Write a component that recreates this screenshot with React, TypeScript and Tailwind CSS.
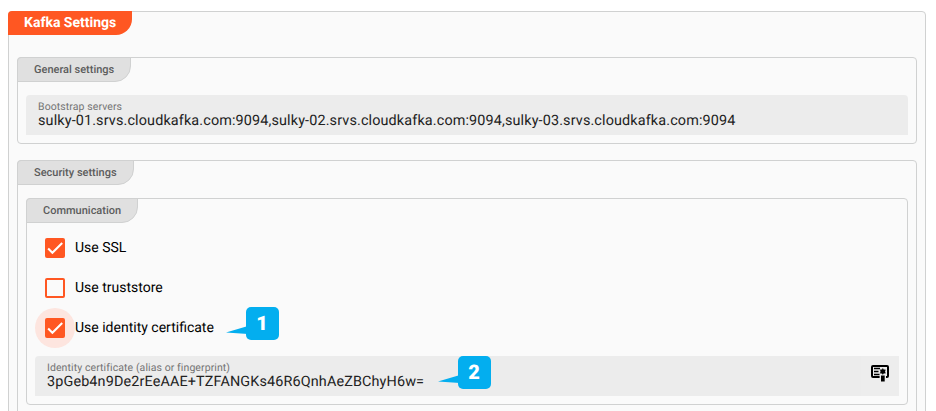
import type { ReactNode } from "react";

function Panel({ title, className, children }: { title: string; className: string; children: ReactNode }) {
  return (
    <section className={`rounded-[4px] border border-[#d0d1d1] ${className}`}>
      <h2 className="-mt-px -ml-px flex h-[25px] w-fit items-center rounded-tl-[4px] rounded-br-[16px] border border-[#d0d1d1] bg-[#e0e0e0] px-4 pt-px text-[11px] font-medium text-[#5c5c5c]">
        {title}
      </h2>
      {children}
    </section>
  );
}

function Field({ label, value, children }: { label: string; value: string; children?: ReactNode }) {
  return (
    <div className="flex h-10 rounded-t-[4px] bg-[#ececec]">
      <div className="flex min-w-0 flex-1 flex-col pl-3 pt-[5px]">
        <span className="h-[12px] text-[10.5px] leading-[13px] tracking-[0.09px] text-[#737373]">{label}</span>
        <span className="text-[14.4px] leading-[17px] tracking-[0.135px] text-[#222]">{value}</span>
      </div>
      {children}
    </div>
  );
}

function Check({ label, checked, focused }: { label: string; checked?: boolean; focused?: boolean }) {
  return (
    <div className="flex h-10 items-center">
      <span className={`flex size-10 shrink-0 items-center justify-center rounded-full ${focused ? "bg-[#fde5df]" : ""}`}>
        <span className={`flex size-5 items-center justify-center rounded-[2px] border-2 border-[#ff5722] ${checked ? "bg-[#ff5722]" : ""}`}>
          {checked && (
            <svg viewBox="0 0 24 24" className="size-4 shrink-0" fill="none" stroke="white" strokeWidth="3.12">
              <path d="M1.73 12.91 8.1 19.28 22.79 4.59" />
            </svg>
          )}
        </span>
      </span>
      <span className="text-[14px] leading-5 text-black">{label}</span>
    </div>
  );
}

function Callout({ n, className }: { n: number; className: string }) {
  return (
    <div className={`absolute flex h-[33px] w-[53px] justify-end ${className}`}>
      <svg className="absolute inset-0" width="53" height="33" viewBox="0 0 53 33">
        <path d="M0 25.5 22 19V27Z" fill="#03aeef" />
      </svg>
      <span className="relative flex h-[33px] w-[33px] items-center justify-center rounded-[5px] bg-[#03aeef] pr-px pb-0.5 text-[20px] font-black leading-none text-white">
        {n}
      </span>
    </div>
  );
}

export default function App() {
  return (
    <main className="relative h-[411px] w-[936px] overflow-hidden bg-white pl-2 pt-[11px] font-['Roboto',sans-serif] [text-rendering:geometricPrecision]">
      <section className="h-[440px] w-[918px] rounded-[4px] border border-[#d0d1d1] bg-[#fafafa]">
        <h1 className="-ml-px -mt-px flex h-6 w-[124px] items-center rounded-tl-[4px] rounded-br-[16px] bg-[#ff5722] pl-4 text-[14px] font-bold text-white">
          Kafka Settings
        </h1>
        <div className="flex flex-col gap-4 px-2 pt-[22px]">
          <Panel title="General settings" className="h-[87px]">
            <div className="px-2 pt-[13px]">
              <Field label="Bootstrap servers" value="sulky-01.srvs.cloudkafka.com:9094,sulky-02.srvs.cloudkafka.com:9094,sulky-03.srvs.cloudkafka.com:9094" />
            </div>
          </Panel>
          <Panel title="Security settings" className="h-[300px]">
            <div className="px-2 pt-[13px]">
              <Panel title="Communication" className="h-[207px]">
                <div className="px-2 pt-[5px]">
                  <Check label="Use SSL" checked />
                  <Check label="Use truststore" />
                  <Check label="Use identity certificate" checked focused />
                </div>
                <div className="px-2 pt-2">
                  <Field label="Identity certificate (alias or fingerprint)" value="3pGeb4n9De2rEeAAE+TZFANGKs46R6QnhAeZBChyH6w=">
                    <div className="flex w-[38px] items-center justify-center bg-[#ededed] pb-[6px]">
                      <svg width="20" height="18" viewBox="0 0 20 18" fill="none" stroke="black">
                        <path d="M9.6 13H3Q2 13 2 12V3Q2 2 3 2H17Q18 2 18 3V12Q18 13 17 13H16" strokeWidth="2" />
                        <path d="M4 4.6H10M4 7.5H8.5M4 10.4H9.5" strokeWidth="1.5" />
                        <path d="M12.8 4.4 13.7 5.8 15.4 5.8 14.9 7.5 15.4 9.2 13.8 9.2 12.8 10.4 11.8 9.2 10.2 9.2 10.7 7.5 10.2 5.8 11.9 5.8Z" fill="black" stroke="black" strokeWidth="0.4" />
                        <path d="M11 11.5H14.7V17.5H11Z" fill="black" stroke="none" />
                      </svg>
                    </div>
                  </Field>
                </div>
              </Panel>
            </div>
          </Panel>
        </div>
      </section>
      <Callout n={1} className="left-[226px] top-[307px]" />
      <Callout n={2} className="left-[438px] top-[356px]" />
    </main>
  );
}
